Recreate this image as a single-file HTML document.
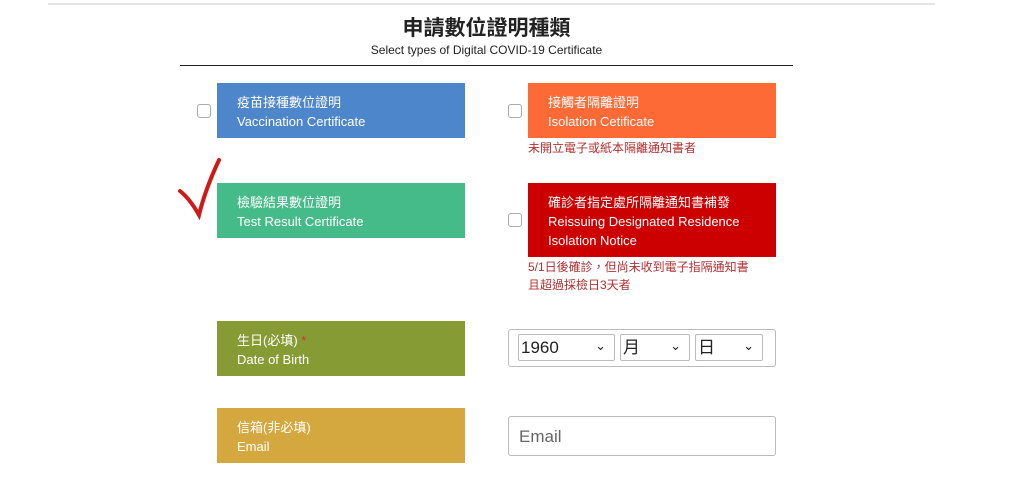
<!DOCTYPE html>
<html><head><meta charset="utf-8"><style>
body{margin:0;width:1024px;height:494px;background:#fff;position:relative;overflow:hidden;font-family:"Liberation Sans","Noto Sans CJK TC",sans-serif}
.a{position:absolute}
.box{position:absolute;color:#fff;font-size:13px;line-height:19px;padding:10px 0 0 20px;box-sizing:border-box;width:248px}
.cb{position:absolute;width:12px;height:12px;border:1px solid #aaa;border-radius:3px;background:#fff}
.note{position:absolute;color:#b03030;font-size:12px;line-height:18px}
.sel{position:absolute;border:1px solid #bbb;border-radius:2px;font-size:17px;line-height:25px;padding-left:2px;box-sizing:border-box;height:27px;top:334px;color:#222}
.sel:after{content:"⌄";position:absolute;right:8px;top:-2px;font-size:13px}
</style></head><body>
<div class="a" style="left:48px;top:3px;width:887px;height:2px;background:#e4e4e4"></div>
<div class="a" style="left:180px;top:12px;width:613px;text-align:center;font-size:21px;font-weight:bold;color:#222">申請數位證明種類</div>
<div class="a" style="left:180px;top:43px;width:613px;text-align:center;font-size:12px;color:#222">Select types of Digital COVID-19 Certificate</div>
<div class="a" style="left:180px;top:65px;width:613px;height:1px;background:#222"></div>

<div class="cb" style="left:197px;top:104px"></div>
<div class="box" style="left:217px;top:83px;height:55px;background:#4e86cc">疫苗接種數位證明<br>Vaccination Certificate</div>
<div class="cb" style="left:508px;top:104px"></div>
<div class="box" style="left:528px;top:83px;height:55px;background:#fe6a35">接觸者隔離證明<br>Isolation Cetificate</div>
<div class="note" style="left:528px;top:139px">未開立電子或紙本隔離通知書者</div>

<div class="box" style="left:217px;top:183px;height:55px;background:#46bb8a">檢驗結果數位證明<br>Test Result Certificate</div>
<div class="cb" style="left:508px;top:213px"></div>
<div class="box" style="left:528px;top:183px;height:74px;background:#cc0000">確診者指定處所隔離通知書補發<br>Reissuing Designated Residence<br>Isolation Notice</div>
<div class="note" style="left:528px;top:258px">5/1日後確診，但尚未收到電子指隔通知書<br>且超過採檢日3天者</div>
<svg class="a" style="left:175px;top:155px" width="50" height="65"><path d="M5 36 Q15 44 24 60 Q30 35 44 5" fill="none" stroke="#d01818" stroke-width="4" stroke-linecap="round"/></svg>

<div class="box" style="left:217px;top:321px;height:55px;background:#879b35">生日(必填) <span style="color:#c33">*</span><br>Date of Birth</div>
<div class="a" style="left:508px;top:329px;width:268px;height:38px;border:1px solid #bbb;border-radius:3px;box-sizing:border-box"></div>
<div class="sel" style="left:518px;width:97px">1960</div>
<div class="sel" style="left:620px;width:70px">月</div>
<div class="sel" style="left:695px;width:68px">日</div>

<div class="box" style="left:217px;top:408px;height:55px;background:#d5a73f">信箱(非必填)<br>Email</div>
<div class="a" style="left:508px;top:416px;width:268px;height:40px;border:1px solid #bbb;border-radius:3px;box-sizing:border-box;font-size:17px;color:#666;padding:10px 0 0 10px">Email</div>
</body></html>
